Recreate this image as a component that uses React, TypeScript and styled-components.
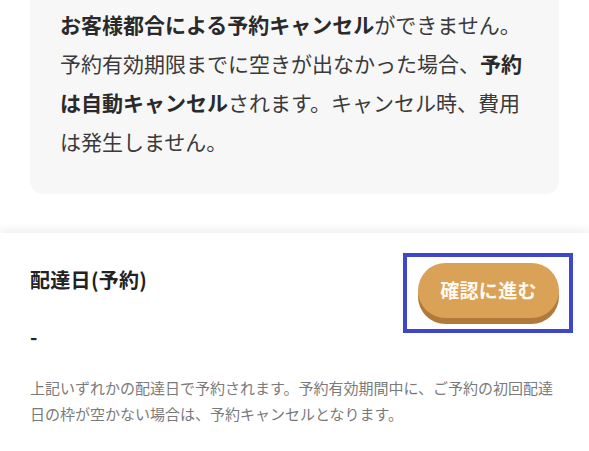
import React from "react";
import styled, { createGlobalStyle } from "styled-components";

const Global = createGlobalStyle`
  html, body { margin: 0; padding: 0; background: #ffffff; }
  body {
    font-family: "Noto Sans CJK JP", "Noto Sans", sans-serif;
    color: #333333;
    -webkit-font-smoothing: antialiased;
  }
  * { box-sizing: border-box; }
`;

const Page = styled.div`
  width: 589px;
  height: 451px;
  overflow: hidden;
  display: flex;
  flex-direction: column;
`;

const Notice = styled.section`
  margin: 0 30px;
  padding: 5px 30px 33px;
  background: #f7f7f7;
  border-radius: 0 0 13px 13px;
  font-size: 21px;
  line-height: 39px;
  color: #3a3a3a;
`;

const Strong = styled.strong`
  font-weight: 700;
  color: #2a2a2a;
`;

const Footer = styled.footer`
  margin-top: 39px;
  flex: 1;
  background: #ffffff;
  box-shadow: 0 -3px 9px rgba(0, 0, 0, 0.07);
  padding: 30px 30px 0;
  display: flex;
  flex-direction: column;
`;

const Row = styled.div`
  display: flex;
  justify-content: space-between;
  align-items: flex-start;
`;

const Info = styled.div`
  display: flex;
  flex-direction: column;
  padding-top: 3px;
`;

const Title = styled.h2`
  margin: 0;
  font-size: 20px;
  line-height: 28px;
  font-weight: 700;
  color: #222222;
  letter-spacing: 0.3px;
`;

const Value = styled.div`
  margin-top: 29px;
  font-size: 20px;
  line-height: 28px;
  font-weight: 700;
  color: #222222;
`;

const ButtonWrap = styled.div`
  position: relative;
  display: flex;
  &::after {
    content: "";
    position: absolute;
    top: -10px;
    left: -15px;
    right: -14px;
    bottom: -9px;
    border: 4px solid #3f46c9;
    pointer-events: none;
  }
`;

const Button = styled.button`
  width: 141px;
  height: 55px;
  margin-bottom: 6px;
  border: none;
  border-radius: 28px;
  background: #daa257;
  box-shadow: 0 6px 0 #b27a3a;
  color: #fffaf2;
  font-family: "Noto Sans CJK JP", "Noto Sans", sans-serif;
  font-size: 19px;
  font-weight: 700;
  letter-spacing: 0.3px;
  display: flex;
  align-items: center;
  justify-content: center;
  padding: 0 0 2px;
  cursor: pointer;
`;

const Note = styled.p`
  margin: 24px 0 0;
  font-size: 15px;
  line-height: 26px;
  color: #7a7a7a;
`;

export default function App() {
  return (
    <>
      <Global />
      <Page>
        <Notice>
          <Strong>お客様都合による予約キャンセル</Strong>ができません。予約有効期限までに空きが出なかった場合、
          <Strong>予約は自動キャンセル</Strong>されます。キャンセル時、費用は発生しません。
        </Notice>
        <Footer>
          <Row>
            <Info>
              <Title>配達日(予約)</Title>
              <Value>-</Value>
            </Info>
            <ButtonWrap>
              <Button type="button">確認に進む</Button>
            </ButtonWrap>
          </Row>
          <Note>
            上記いずれかの配達日で予約されます。予約有効期間中に、ご予約の初回配達日の枠が空かない場合は、予約キャンセルとなります。
          </Note>
        </Footer>
      </Page>
    </>
  );
}
